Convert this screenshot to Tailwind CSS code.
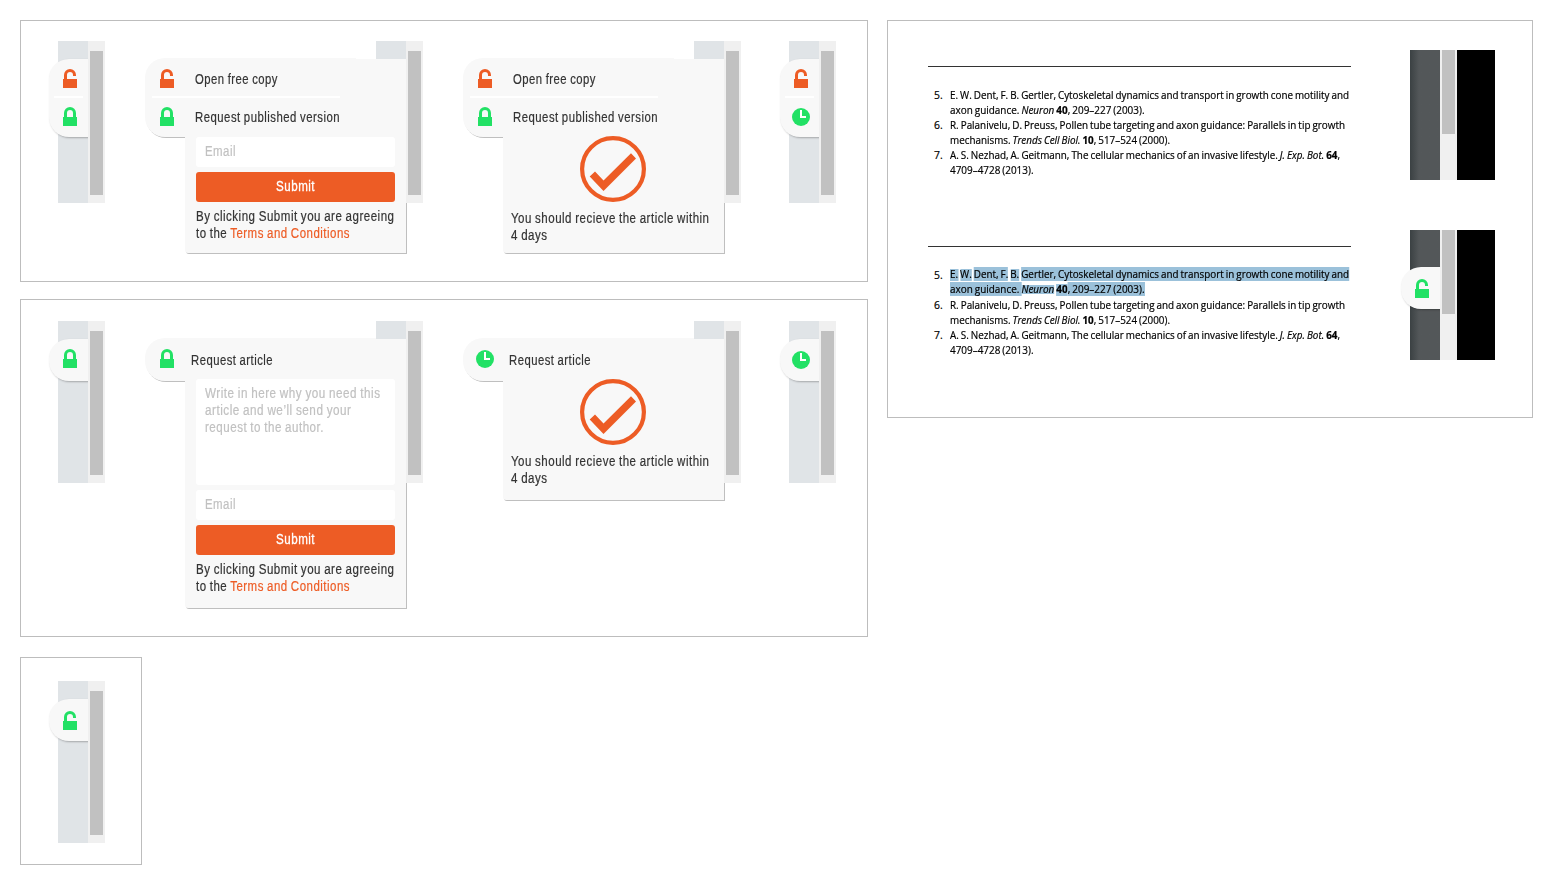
<!DOCTYPE html>
<html lang="en">
<head>
<meta charset="utf-8">
<title>Article request widget</title>
<script src="https://cdn.jsdelivr.net/npm/@tailwindcss/browser@4"></script>
</head>
<body class="bg-white font-['Liberation_Sans',sans-serif] text-[14px] leading-[17px] text-[#333333] [-webkit-text-stroke:0.2px] [word-spacing:-0.6px]">
<svg class="hidden">
  <symbol id="lock" viewBox="0 0 14 19"><path d="M0 10h14v9H0z" fill="currentColor"/><path d="M2.500 10.500V6a4.500 4.500 0 0 1 9 0V10.500" fill="none" stroke="currentColor" stroke-width="3"/></symbol>
  <symbol id="unlock" viewBox="0 0 14 19"><path d="M0 10h14v9H0z" fill="currentColor"/><path d="M2.500 10.500V6a4.500 4.500 0 0 1 9 0V7" fill="none" stroke="currentColor" stroke-width="3"/></symbol>
  <symbol id="clock" viewBox="0 0 18 18"><circle cx="9" cy="9" r="9" fill="currentColor"/><path d="M8 2h2v6h4v2H8z" fill="#fff"/></symbol>
  <symbol id="done" viewBox="0 0 66 66"><circle cx="33" cy="33" r="30.900" fill="none" stroke="currentColor" stroke-width="4.200"/><path d="M9.700 40.600 15 35.500 23.500 44.500 51 17.300 56 22.500 23.500 55z" fill="currentColor"/></symbol>
</svg>
<div class="flex items-start gap-[19px] p-5">
  <div class="flex w-[848px] shrink-0 flex-col">

    <section class="flex h-[262px] items-start border border-[#bdbdbd] pt-5 pl-[37px]">
      <div class="relative flex h-[162px] w-[47px]">
        <div class="w-[30px] bg-[#e0e4e7]"></div>
        <div class="w-[17px] bg-[#f0f0f0] px-[2px] pt-[10px]"><div class="h-36 w-[13px] bg-[#c1c1c1]"></div></div>
        <div class="absolute top-0 -left-[20px] h-full w-[50px] overflow-hidden">
          <div class="mt-[18px] ml-[11px] flex h-[78px] w-[45px] flex-col rounded-l-[20px] bg-[#f8f8f8] pl-[5px] shadow-[1px_1px_2px_rgba(0,0,0,0.27)]">
            <svg class="mt-[10px] ml-[9px] h-[19px] w-[14px] shrink-0 text-[#ed5c25]"><use href="#unlock"/></svg>
            <div class="mt-2 h-[2px] w-[29px] shrink-0 bg-white"></div>
            <svg class="mt-[9px] ml-[9px] h-[19px] w-[14px] shrink-0 text-[#22e165]"><use href="#lock"/></svg>
          </div>
        </div>
      </div>

      <div class="relative ml-10 flex h-[162px] w-[278px] justify-end">
        <div class="w-[30px] bg-[#e0e4e7]"></div>
        <div class="absolute top-[17px] left-0 w-[261px] [filter:drop-shadow(1px_1px_0.7px_rgba(0,0,0,0.25))]">
          <div class="h-[79px] w-[211px] rounded-l-[20px] bg-[#f8f8f8]"></div>
          <div class="-mt-[78px] ml-10 h-[194px] rounded-bl-[3px] bg-[#f8f8f8]"></div>
        </div>
        <div class="relative w-[17px] bg-[#f0f0f0] px-[2px] pt-[10px]"><div class="h-36 w-[13px] bg-[#c1c1c1]"></div></div>
        <div class="absolute top-[17px] left-0 flex w-[261px] flex-col pt-[11px]">
          <div class="flex h-[19px] pl-[15px]"><svg class="h-[19px] w-[14px] text-[#ed5c25]"><use href="#unlock"/></svg><span class="mt-[2px] ml-[21px] inline-block origin-left tracking-[0.6px] whitespace-nowrap" data-w="83">Open free copy</span></div>
          <div class="mt-2 ml-[7px] h-[2px] w-[188px] bg-white"></div>
          <div class="mt-[9px] flex h-[19px] pl-[15px]"><svg class="h-[19px] w-[14px] text-[#22e165]"><use href="#lock"/></svg><span class="mt-[2px] ml-[21px] inline-block origin-left tracking-[0.6px] whitespace-nowrap" data-w="145">Request published version</span></div>
          <div class="mt-[11px] mr-[11px] ml-[51px] flex flex-col">
            <div class="h-[30px] rounded-[3px] bg-white px-[9px] pt-[6px] text-[#c1c1c1]"><span class="inline-block origin-left tracking-[0.6px]" data-w="31">Email</span></div>
            <div class="mt-[5px] h-[30px] rounded-[3px] bg-[#ed5c25] pt-[6px] text-center text-white"><span class="inline-block origin-center tracking-[0.6px] [-webkit-text-stroke:0.3px_white]" data-w="39">Submit</span></div>
            <div class="mt-[6px] whitespace-nowrap"><div class="w-fit origin-left tracking-[0.6px]" data-w="198.500">By clicking Submit you are agreeing</div><div class="w-fit origin-left tracking-[0.6px]" data-w="154">to the <span class="text-[#ed5c25]">Terms and Conditions</span></div></div>
          </div>
        </div>
      </div>

      <div class="relative ml-10 flex h-[162px] w-[278px] justify-end">
        <div class="w-[30px] bg-[#e0e4e7]"></div>
        <div class="absolute top-[17px] left-0 w-[261px] [filter:drop-shadow(1px_1px_0.7px_rgba(0,0,0,0.25))]">
          <div class="h-[79px] w-[211px] rounded-l-[20px] bg-[#f8f8f8]"></div>
          <div class="-mt-[78px] ml-10 h-[194px] rounded-bl-[3px] bg-[#f8f8f8]"></div>
        </div>
        <div class="relative w-[17px] bg-[#f0f0f0] px-[2px] pt-[10px]"><div class="h-36 w-[13px] bg-[#c1c1c1]"></div></div>
        <div class="absolute top-[17px] left-0 flex w-[261px] flex-col pt-[11px]">
          <div class="flex h-[19px] pl-[15px]"><svg class="h-[19px] w-[14px] text-[#ed5c25]"><use href="#unlock"/></svg><span class="mt-[2px] ml-[21px] inline-block origin-left tracking-[0.6px] whitespace-nowrap" data-w="83">Open free copy</span></div>
          <div class="mt-2 ml-[7px] h-[2px] w-[188px] bg-white"></div>
          <div class="mt-[9px] flex h-[19px] pl-[15px]"><svg class="h-[19px] w-[14px] text-[#22e165]"><use href="#lock"/></svg><span class="mt-[2px] ml-[21px] inline-block origin-left tracking-[0.6px] whitespace-nowrap" data-w="145">Request published version</span></div>
          <svg class="mt-[10px] ml-[117px] h-[66px] w-[66px] text-[#ed5c25]"><use href="#done"/></svg>
          <div class="mt-2 ml-12 whitespace-nowrap"><div class="w-fit origin-left tracking-[0.6px]" data-w="198.500">You should recieve the article within</div><div class="w-fit origin-left tracking-[0.6px]" data-w="36.500">4 days</div></div>
        </div>
      </div>

      <div class="relative ml-12 flex h-[162px] w-[47px]">
        <div class="w-[30px] bg-[#e0e4e7]"></div>
        <div class="w-[17px] bg-[#f0f0f0] px-[2px] pt-[10px]"><div class="h-36 w-[13px] bg-[#c1c1c1]"></div></div>
        <div class="absolute top-0 -left-[20px] h-full w-[50px] overflow-hidden">
          <div class="mt-[18px] ml-[11px] flex h-[78px] w-[45px] flex-col rounded-l-[20px] bg-[#f8f8f8] pl-[5px] shadow-[1px_1px_2px_rgba(0,0,0,0.27)]">
            <svg class="mt-[10px] ml-[9px] h-[19px] w-[14px] shrink-0 text-[#ed5c25]"><use href="#unlock"/></svg>
            <div class="mt-2 h-[2px] w-[29px] shrink-0 bg-white"></div>
            <svg class="mt-[10px] ml-[7px] h-[18px] w-[18px] shrink-0 text-[#22e165]"><use href="#clock"/></svg>
          </div>
        </div>
      </div>
    </section>

    <section class="mt-[17px] flex h-[338px] items-start border border-[#bdbdbd] pt-[21px] pl-[37px]">
      <div class="relative flex h-[162px] w-[47px]">
        <div class="w-[30px] bg-[#e0e4e7]"></div>
        <div class="w-[17px] bg-[#f0f0f0] px-[2px] pt-[10px]"><div class="h-36 w-[13px] bg-[#c1c1c1]"></div></div>
        <div class="absolute top-0 -left-[20px] h-full w-[50px] overflow-hidden">
          <div class="mt-[18px] ml-[11px] h-[42px] w-[45px] rounded-l-[20px] bg-[#f8f8f8] pt-[10px] pl-[14px] shadow-[1px_1px_2px_rgba(0,0,0,0.27)]">
            <svg class="h-[19px] w-[14px] text-[#22e165]"><use href="#lock"/></svg>
          </div>
        </div>
      </div>

      <div class="relative ml-10 flex h-[162px] w-[278px] justify-end">
        <div class="w-[30px] bg-[#e0e4e7]"></div>
        <div class="absolute top-[17px] left-0 w-[261px] [filter:drop-shadow(1px_1px_0.7px_rgba(0,0,0,0.25))]">
          <div class="h-[43px] w-[231px] rounded-l-[20px] bg-[#f8f8f8]"></div>
          <div class="-mt-[42px] ml-10 h-[269px] rounded-bl-[3px] bg-[#f8f8f8]"></div>
        </div>
        <div class="relative w-[17px] bg-[#f0f0f0] px-[2px] pt-[10px]"><div class="h-36 w-[13px] bg-[#c1c1c1]"></div></div>
        <div class="absolute top-[17px] left-0 flex w-[261px] flex-col pt-[11px]">
          <div class="flex h-[19px] pl-[15px]"><svg class="h-[19px] w-[14px] text-[#22e165]"><use href="#lock"/></svg><span class="mt-[3px] ml-[17px] inline-block origin-left tracking-[0.6px] whitespace-nowrap" data-w="82">Request article</span></div>
          <div class="mt-[11px] mr-[11px] ml-[51px] flex flex-col">
            <div class="h-[106px] rounded-[3px] bg-white px-[9px] pt-[6px] whitespace-nowrap text-[#c1c1c1]"><div class="w-fit origin-left tracking-[0.6px]" data-w="175.500">Write in here why you need this</div><div class="w-fit origin-left tracking-[0.6px]" data-w="146.500">article and we’ll send your</div><div class="w-fit origin-left tracking-[0.6px]" data-w="119">request to the author.</div></div>
            <div class="mt-[5px] h-[30px] rounded-[3px] bg-white px-[9px] pt-[6px] text-[#c1c1c1]"><span class="inline-block origin-left tracking-[0.6px]" data-w="31">Email</span></div>
            <div class="mt-[5px] h-[30px] rounded-[3px] bg-[#ed5c25] pt-[6px] text-center text-white"><span class="inline-block origin-center tracking-[0.6px] [-webkit-text-stroke:0.3px_white]" data-w="39">Submit</span></div>
            <div class="mt-[6px] whitespace-nowrap"><div class="w-fit origin-left tracking-[0.6px]" data-w="198.500">By clicking Submit you are agreeing</div><div class="w-fit origin-left tracking-[0.6px]" data-w="154">to the <span class="text-[#ed5c25]">Terms and Conditions</span></div></div>
          </div>
        </div>
      </div>

      <div class="relative ml-10 flex h-[162px] w-[278px] justify-end">
        <div class="w-[30px] bg-[#e0e4e7]"></div>
        <div class="absolute top-[17px] left-0 w-[261px] [filter:drop-shadow(1px_1px_0.7px_rgba(0,0,0,0.25))]">
          <div class="h-[43px] w-[231px] rounded-l-[20px] bg-[#f8f8f8]"></div>
          <div class="-mt-[42px] ml-10 h-[161px] rounded-bl-[3px] bg-[#f8f8f8]"></div>
        </div>
        <div class="relative w-[17px] bg-[#f0f0f0] px-[2px] pt-[10px]"><div class="h-36 w-[13px] bg-[#c1c1c1]"></div></div>
        <div class="absolute top-[17px] left-0 flex w-[261px] flex-col pt-[11px]">
          <div class="flex h-[19px] pl-[13px]"><svg class="mt-px h-[18px] w-[18px] text-[#22e165]"><use href="#clock"/></svg><span class="mt-[3px] ml-[15px] inline-block origin-left tracking-[0.6px] whitespace-nowrap" data-w="82">Request article</span></div>
          <svg class="mt-[11px] ml-[117px] h-[66px] w-[66px] text-[#ed5c25]"><use href="#done"/></svg>
          <div class="mt-2 ml-12 whitespace-nowrap"><div class="w-fit origin-left tracking-[0.6px]" data-w="198.500">You should recieve the article within</div><div class="w-fit origin-left tracking-[0.6px]" data-w="36.500">4 days</div></div>
        </div>
      </div>

      <div class="relative ml-12 flex h-[162px] w-[47px]">
        <div class="w-[30px] bg-[#e0e4e7]"></div>
        <div class="w-[17px] bg-[#f0f0f0] px-[2px] pt-[10px]"><div class="h-36 w-[13px] bg-[#c1c1c1]"></div></div>
        <div class="absolute top-0 -left-[20px] h-full w-[50px] overflow-hidden">
          <div class="mt-[18px] ml-[11px] h-[42px] w-[45px] rounded-l-[20px] bg-[#f8f8f8] pt-[12px] pl-[12px] shadow-[1px_1px_2px_rgba(0,0,0,0.27)]">
            <svg class="h-[18px] w-[18px] text-[#22e165]"><use href="#clock"/></svg>
          </div>
        </div>
      </div>
    </section>

    <section class="mt-5 h-[208px] w-[122px] border border-[#bdbdbd] pt-[23px] pl-[37px]">
      <div class="relative flex h-[162px] w-[47px]">
        <div class="w-[30px] bg-[#e0e4e7]"></div>
        <div class="w-[17px] bg-[#f0f0f0] px-[2px] pt-[10px]"><div class="h-36 w-[13px] bg-[#c1c1c1]"></div></div>
        <div class="absolute top-0 -left-[20px] h-full w-[50px] overflow-hidden">
          <div class="mt-[18px] ml-[11px] h-[42px] w-[45px] rounded-l-[20px] bg-[#f8f8f8] pt-[12px] pl-[14px] shadow-[1px_1px_2px_rgba(0,0,0,0.27)]">
            <svg class="h-[19px] w-[14px] text-[#22e165]"><use href="#unlock"/></svg>
          </div>
        </div>
      </div>
    </section>
  </div>

  <section class="flex h-[398px] w-[646px] shrink-0 flex-col gap-[50px] border border-[#bdbdbd] pt-[29px] pl-10">
    <div class="flex h-[130px] items-start">
      <div class="mt-4 w-[423px] shrink-0 border-t border-[#333] pt-[21px] font-['Open_Sans','Noto_Sans',sans-serif] text-[10.4px] leading-[15px] font-medium whitespace-nowrap text-black">
        <div class="flex pl-[6px]"><span class="w-4 shrink-0">5.</span><div><div class="w-fit origin-left" data-w="399">E. W. Dent, F. B. Gertler, Cytoskeletal dynamics and transport in growth cone motility and</div><div class="w-fit origin-left" data-w="194.500">axon guidance. <i>Neuron</i> <b>40</b>, 209–227 (2003).</div></div></div>
        <div class="flex pl-[6px]"><span class="w-4 shrink-0">6.</span><div><div class="w-fit origin-left" data-w="395">R. Palanivelu, D. Preuss, Pollen tube targeting and axon guidance: Parallels in tip growth</div><div class="w-fit origin-left" data-w="220">mechanisms. <i>Trends Cell Biol.</i> <b>10</b>, 517–524 (2000).</div></div></div>
        <div class="flex pl-[6px]"><span class="w-4 shrink-0">7.</span><div><div class="w-fit origin-left" data-w="390">A. S. Nezhad, A. Geitmann, The cellular mechanics of an invasive lifestyle. <i>J. Exp. Bot.</i> <b>64</b>,</div><div class="w-fit origin-left" data-w="83.500">4709–4728 (2013).</div></div></div>
      </div>
      <div class="ml-[59px] flex h-[130px]">
        <div class="w-[30px] bg-linear-to-r from-[#3b4143] to-[#535759] to-30%"></div>
        <div class="w-[17px] bg-[#f0f0f0] px-[2px]"><div class="h-[84px] w-[13px] bg-[#c1c1c1]"></div></div>
        <div class="w-[38px] bg-black"></div>
      </div>
    </div>
    <div class="flex h-[130px] items-start">
      <div class="mt-4 w-[423px] shrink-0 border-t border-[#333] pt-[20px] font-['Open_Sans','Noto_Sans',sans-serif] text-[10.4px] leading-[15px] font-medium whitespace-nowrap text-black">
        <div class="mb-px flex pl-[6px]"><span class="mt-px w-4 shrink-0">5.</span><div><div class="w-fit origin-left" data-w="399"><span class="bg-[linear-gradient(transparent_2px,#9bc1da_2px)]">E.</span> <span class="bg-[linear-gradient(transparent_2px,#9bc1da_2px)]">W.</span> <span class="bg-[#9bc1da]">Dent, F.</span> <span class="bg-[linear-gradient(transparent_2px,#9bc1da_2px)]">B.</span> <span class="bg-[#9bc1da]">Gertler, Cytoskeletal dynamics and transport in growth cone motility and</span></div><div class="w-fit origin-left" data-w="194.500"><span class="bg-[#9bc1da]">axon guidance. </span><i class="bg-[linear-gradient(transparent_3px,#9bc1da_3px,#9bc1da_12px,transparent_12px)]">Neuron</i> <b class="bg-[linear-gradient(transparent_2px,#9bc1da_2px)]">40</b><span class="bg-[#9bc1da]">, 209–227 (2003).</span></div></div></div>
        <div class="flex pl-[6px]"><span class="w-4 shrink-0">6.</span><div><div class="w-fit origin-left" data-w="395">R. Palanivelu, D. Preuss, Pollen tube targeting and axon guidance: Parallels in tip growth</div><div class="w-fit origin-left" data-w="220">mechanisms. <i>Trends Cell Biol.</i> <b>10</b>, 517–524 (2000).</div></div></div>
        <div class="flex pl-[6px]"><span class="w-4 shrink-0">7.</span><div><div class="w-fit origin-left" data-w="390">A. S. Nezhad, A. Geitmann, The cellular mechanics of an invasive lifestyle. <i>J. Exp. Bot.</i> <b>64</b>,</div><div class="w-fit origin-left" data-w="83.500">4709–4728 (2013).</div></div></div>
      </div>
      <div class="relative ml-[59px] flex h-[130px]">
        <div class="w-[30px] bg-linear-to-r from-[#3b4143] to-[#535759] to-30%"></div>
        <div class="w-[17px] bg-[#f0f0f0] px-[2px]"><div class="h-[84px] w-[13px] bg-[#c1c1c1]"></div></div>
        <div class="w-[38px] bg-black"></div>
        <div class="absolute top-0 -left-[20px] h-full w-[50px] overflow-hidden">
          <div class="mt-[37px] ml-[11px] h-[42px] w-[45px] rounded-l-[20px] bg-[#f8f8f8] pt-[12px] pl-[14px] shadow-[1px_1px_2px_rgba(0,0,0,0.27)]">
            <svg class="h-[19px] w-[14px] text-[#22e165]"><use href="#unlock"/></svg>
          </div>
        </div>
      </div>
    </div>
  </section>
</div>
<script>
  // Condense each marked line horizontally to its set width, again whenever its natural width changes.
  var fit = new ResizeObserver(function (entries) {
    entries.forEach(function (entry) {
      var el = entry.target;
      var natural = entry.contentRect.width;
      if (natural > 0) el.style.transform = 'scaleX(' + el.dataset.w / natural + ')';
    });
  });
  document.querySelectorAll('[data-w]').forEach(function (el) { fit.observe(el); });
</script>
</body>
</html>
